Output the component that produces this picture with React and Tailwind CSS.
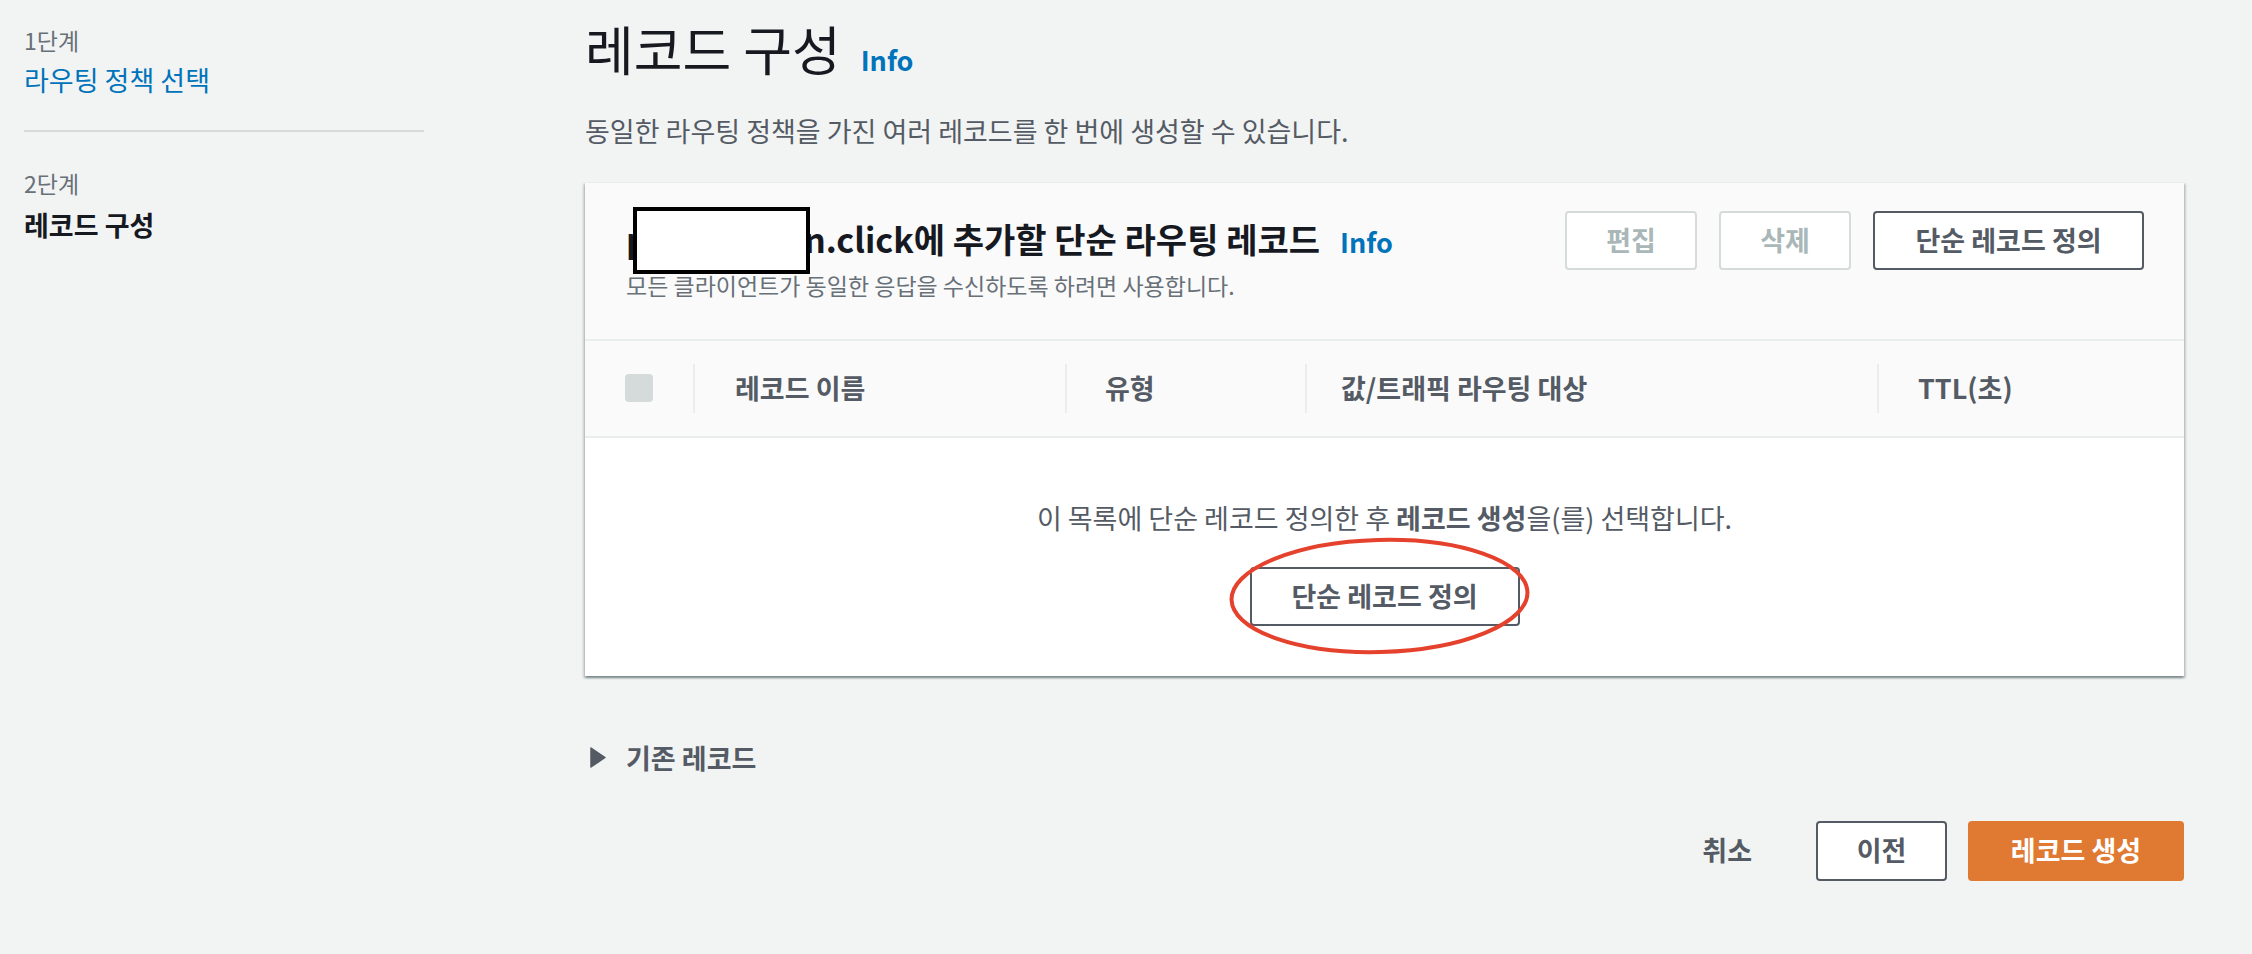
export default function App() {
  return (
    <div className="min-h-screen bg-[#f2f3f3] font-['Noto_Sans_CJK_KR','Noto_Sans',sans-serif] text-[#16191f]">
      <div className="flex">
        {/* wizard steps */}
        <nav className="ml-[24px] w-[400px] shrink-0 pt-[24px]">
          <p className="text-[23px] leading-[32px] text-[#687078]">1단계</p>
          <p className="mt-[5px] text-[27px] leading-[38px] text-[#0073bb]">라우팅 정책 선택</p>
          <div className="mt-[31px] h-[2px] bg-[#d5dbdb]" />
          <p className="mt-[35px] text-[23px] leading-[32px] text-[#687078]">2단계</p>
          <p className="mt-[7px] text-[27px] font-bold leading-[38px] text-[#16191f]">레코드 구성</p>
        </nav>

        <main className="ml-[161px] w-[1599px] shrink-0 pt-[18px]">
          <div className="flex items-baseline gap-[20px]">
            <h1 className="text-[53px] font-normal leading-[60px] text-[#16191f]">레코드 구성</h1>
            <span className="text-[27px] font-bold text-[#0073bb]">Info</span>
          </div>
          <p className="mt-[31px] text-[27px] leading-[38px] text-[#545b64]">
            동일한 라우팅 정책을 가진 여러 레코드를 한 번에 생성할 수 있습니다.
          </p>

          {/* records card */}
          <section className="mt-[32px] border-t border-[#eaeded] bg-white shadow-[0_2px_2px_0_rgba(0,28,36,0.3),2px_2px_2px_0_rgba(0,28,36,0.15),-2px_2px_2px_0_rgba(0,28,36,0.15)]">
            <div className="flex h-[158px] items-start justify-between border-b-2 border-[#eaeded] bg-[#fafafa] pl-[41px] pr-[40px] pt-[28px]">
              <div className="mt-[6px]">
                <div className="flex items-baseline gap-[20px]">
                  <h2 className="relative text-[34px] font-bold leading-[44px] text-[#16191f]">
                    p<span className="inline-block w-[156px]" />n.click에 추가할 단순 라우팅 레코드
                    <span className="absolute left-[7px] -top-[10px] h-[67px] w-[177px] border-[4px] border-black bg-white" />
                  </h2>
                  <span className="text-[27px] font-bold text-[#0073bb]">Info</span>
                </div>
                <p className="mt-[7px] text-[23px] leading-[32px] text-[#687078]">
                  모든 클라이언트가 동일한 응답을 수신하도록 하려면 사용합니다.
                </p>
              </div>
              <div className="flex gap-[22px]">
                <button className="h-[59px] w-[132px] rounded-[4px] border-2 border-[#d5dbdb] bg-white text-[27px] font-bold text-[#aab7b8]">
                  편집
                </button>
                <button className="h-[59px] w-[132px] rounded-[4px] border-2 border-[#d5dbdb] bg-white text-[27px] font-bold text-[#aab7b8]">
                  삭제
                </button>
                <button className="h-[59px] w-[271px] rounded-[4px] border-2 border-[#545b64] bg-white text-[27px] font-bold text-[#545b64]">
                  단순 레코드 정의
                </button>
              </div>
            </div>

            {/* table header */}
            <div className="flex h-[97px] items-center border-b-2 border-[#eaeded] bg-[#fafafa] text-[27px] font-bold text-[#545b64]">
              <div className="flex w-[108px] items-center pl-[40px]">
                <span className="h-[28px] w-[28px] rounded-[4px] bg-[#d5dbdb]" />
              </div>
              <div className="flex w-[372px] items-center">
                <span className="h-[49px] w-[2px] bg-[#eaeded]" />
                <span className="pl-[40px]">레코드 이름</span>
              </div>
              <div className="flex w-[240px] items-center">
                <span className="h-[49px] w-[2px] bg-[#eaeded]" />
                <span className="pl-[38px]">유형</span>
              </div>
              <div className="flex w-[572px] items-center">
                <span className="h-[49px] w-[2px] bg-[#eaeded]" />
                <span className="pl-[34px]">값/트래픽 라우팅 대상</span>
              </div>
              <div className="flex flex-1 items-center">
                <span className="h-[49px] w-[2px] bg-[#eaeded]" />
                <span className="pl-[39px]">TTL(초)</span>
              </div>
            </div>

            {/* empty state */}
            <div className="flex flex-col items-center pb-[50px] pt-[61px]">
              <p className="text-[27px] leading-[38px] text-[#545b64]">
                이 목록에 단순 레코드 정의한 후 <b className="font-bold">레코드 생성</b>을(를) 선택합니다.
              </p>
              <div className="relative mt-[30px]">
                <button className="h-[59px] w-[270px] rounded-[4px] border-2 border-[#545b64] bg-white text-[27px] font-bold text-[#545b64]">
                  단순 레코드 정의
                </button>
                <svg
                  className="pointer-events-none absolute -left-[22px] -top-[31px]"
                  width="303"
                  height="120"
                  viewBox="0 0 303 120"
                >
                  <ellipse
                    cx="151.5"
                    cy="60"
                    rx="148"
                    ry="56"
                    fill="none"
                    stroke="#e5422d"
                    strokeWidth="4"
                    transform="rotate(-1.5 151.5 60)"
                  />
                </svg>
              </div>
            </div>
          </section>

          {/* existing records */}
          <div className="mt-[63px] flex items-center gap-[20px] pl-[5px] text-[27px] font-bold leading-[38px] text-[#545b64]">
            <svg width="16" height="21" viewBox="0 0 16 21">
              <path d="M1 1 L15 10.5 L1 20 Z" fill="#545b64" stroke="#545b64" strokeWidth="1.5" strokeLinejoin="round" />
            </svg>
            <span>기존 레코드</span>
          </div>

          {/* wizard actions */}
          <div className="mt-[44px] flex items-center justify-end text-[27px] font-bold">
            <button className="mr-[64px] text-[#545b64]">취소</button>
            <button className="h-[60px] w-[131px] rounded-[4px] border-2 border-[#545b64] bg-white text-[#545b64]">
              이전
            </button>
            <button className="ml-[21px] h-[60px] w-[216px] rounded-[4px] bg-[#e07a32] text-white">
              레코드 생성
            </button>
          </div>
        </main>
      </div>
    </div>
  );
}
